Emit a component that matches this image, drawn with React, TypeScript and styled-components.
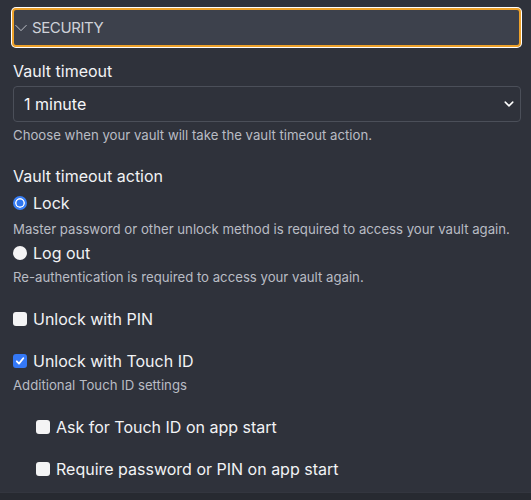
import React from "react";
import styled, { createGlobalStyle } from "styled-components";

const GlobalStyle = createGlobalStyle`
  html, body {
    margin: 0;
    padding: 0;
    background: #2f323b;
  }
  body {
    font-family: Inter, "Noto Sans", sans-serif;
    -webkit-font-smoothing: antialiased;
  }
`;

const Page = styled.div`
  display: flex;
  flex-direction: column;
  height: 100vh;
  overflow: hidden;
  padding-top: 8px;
  box-sizing: border-box;
`;

const SectionHeader = styled.button`
  display: flex;
  align-items: center;
  gap: 4px;
  height: 39px;
  margin: 0 10px 0 12px;
  padding: 0;
  box-sizing: border-box;
  background: #3d414c;
  border: 2px solid #eda12a;
  border-radius: 4px;
  box-shadow: 0 0 0 1px #ffffff;
  color: #cfd2d9;
  font-family: inherit;
  font-size: 15px;
  letter-spacing: -0.4px;
  text-transform: uppercase;
  text-align: left;
  cursor: pointer;
`;

const Content = styled.div`
  display: flex;
  flex-direction: column;
  padding: 0 10px 0 13px;
`;

const Label = styled.div<{ $top: number }>`
  margin-top: ${(p) => p.$top}px;
  font-size: 16px;
  line-height: 20px;
  color: #f2f3f5;
`;

const SelectBox = styled.div`
  display: flex;
  align-items: center;
  justify-content: space-between;
  margin-top: 5px;
  height: 36px;
  padding: 0 6px 0 10px;
  box-sizing: border-box;
  border: 1px solid #4b4f59;
  border-radius: 4px;
  color: #f5f6f8;
  font-size: 16px;
`;

const Help = styled.div<{ $top: number }>`
  margin-top: ${(p) => p.$top}px;
  font-size: 13.2px;
  line-height: 18px;
  color: #b9bcc4;
`;

const OptionRow = styled.label<{ $top: number; $indent?: number }>`
  display: flex;
  align-items: center;
  gap: 6px;
  margin-top: ${(p) => p.$top}px;
  padding-left: ${(p) => p.$indent ?? 0}px;
  height: 20px;
  font-size: 16px;
  color: #f2f3f5;
`;

const Radio = styled.span<{ $on?: boolean }>`
  width: 14px;
  height: 14px;
  border-radius: 50%;
  box-sizing: border-box;
  flex-shrink: 0;
  background: ${(p) => (p.$on ? "#2f76f0" : "#f4f4f5")};
  border: ${(p) => (p.$on ? "2px solid #3a80f7" : "none")};
  box-shadow: ${(p) => (p.$on ? "inset 0 0 0 1.5px #ffffff" : "none")};
`;

const Check = styled.span<{ $on?: boolean }>`
  display: flex;
  align-items: center;
  justify-content: center;
  width: 14px;
  height: 14px;
  border-radius: 3px;
  flex-shrink: 0;
  background: ${(p) => (p.$on ? "#3478f6" : "#f4f4f5")};
`;

const Footer = styled.div`
  flex: 1;
  margin-top: 13px;
  background: #272a31;
  border-top: 1px solid #33363f;
`;

const Chevron = ({ w, h, color, width }: { w: number; h: number; color: string; width: number }) => (
  <svg width={w} height={h} viewBox="0 0 16 16" fill="none">
    <path d="M2 5 L8 11 L14 5" stroke={color} strokeWidth={width} strokeLinecap="round" strokeLinejoin="round" />
  </svg>
);

const Tick = () => (
  <svg width="10" height="10" viewBox="0 0 10 10" fill="none">
    <path d="M1.8 5.3 L4 7.6 L8.3 2.2" stroke="#fff" strokeWidth="1.8" strokeLinecap="round" strokeLinejoin="round" />
  </svg>
);

export default function App() {
  return (
    <>
      <GlobalStyle />
      <Page>
        <SectionHeader>
          <Chevron w={14} h={14} color="#cfd2d9" width={1} />
          Security
        </SectionHeader>
        <Content>
          <Label $top={14}>Vault timeout</Label>
          <SelectBox>
            <span>1 minute</span>
            <Chevron w={10} h={10} color="#ffffff" width={2.4} />
          </SelectBox>
          <Help $top={4}>Choose when your vault will take the vault timeout action.</Help>

          <Label $top={22}>Vault timeout action</Label>
          <OptionRow $top={7}>
            <Radio $on />
            Lock
          </OptionRow>
          <Help $top={7}>Master password or other unlock method is required to access your vault again.</Help>
          <OptionRow $top={5}>
            <Radio />
            Log out
          </OptionRow>
          <Help $top={5}>Re-authentication is required to access your vault again.</Help>

          <OptionRow $top={23}>
            <Check />
            Unlock with PIN
          </OptionRow>
          <OptionRow $top={22}>
            <Check $on>
              <Tick />
            </Check>
            Unlock with Touch ID
          </OptionRow>
          <Help $top={5}>Additional Touch ID settings</Help>
          <OptionRow $top={23} $indent={23}>
            <Check />
            Ask for Touch ID on app start
          </OptionRow>
          <OptionRow $top={22} $indent={23}>
            <Check />
            Require password or PIN on app start
          </OptionRow>
        </Content>
        <Footer />
      </Page>
    </>
  );
}
